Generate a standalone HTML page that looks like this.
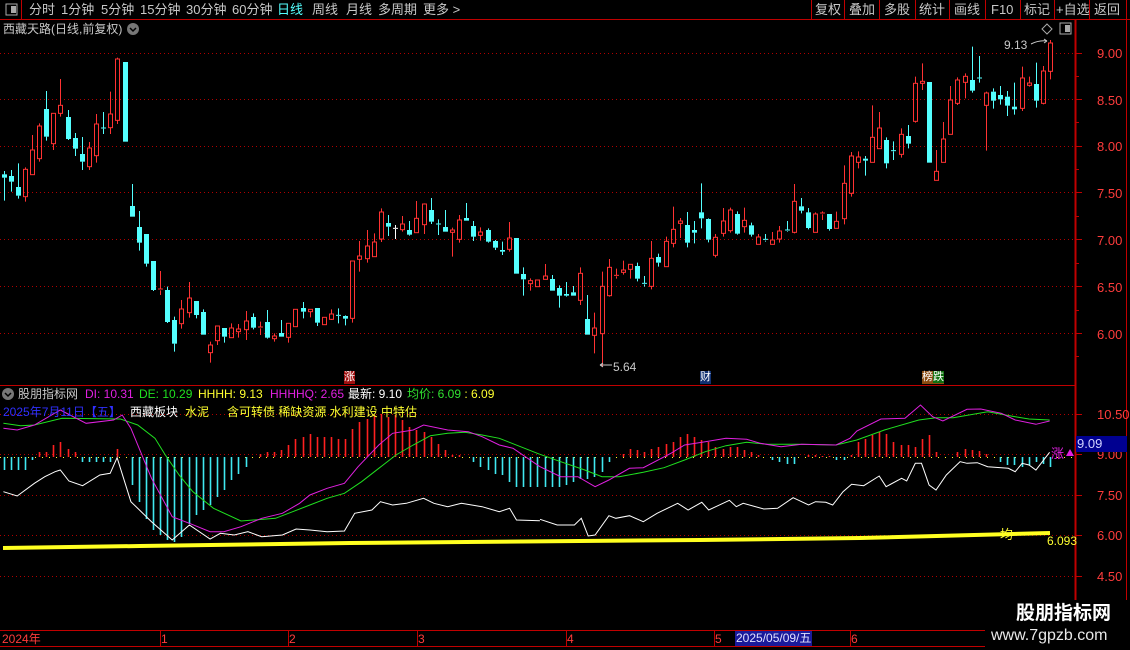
<!DOCTYPE html>
<html><head><meta charset="utf-8">
<style>
body{margin:0;background:#000;width:1130px;height:650px;overflow:hidden;position:relative;font-family:"Liberation Sans","Noto Sans CJK SC",sans-serif;}
.t{position:absolute;white-space:nowrap;font-size:13px;line-height:15px;}
.s{font-size:12px}
svg{position:absolute;left:0;top:0}
</style></head><body>
<svg id="s" width="1130" height="650" xmlns="http://www.w3.org/2000/svg"></svg>

<!-- top bar -->
<div class="t" style="left:29px;top:2px;color:#c8c8c8">分时</div>
<div class="t" style="left:61px;top:2px;color:#c8c8c8">1分钟</div>
<div class="t" style="left:101px;top:2px;color:#c8c8c8">5分钟</div>
<div class="t" style="left:140px;top:2px;color:#c8c8c8">15分钟</div>
<div class="t" style="left:186px;top:2px;color:#c8c8c8">30分钟</div>
<div class="t" style="left:232px;top:2px;color:#c8c8c8">60分钟</div>
<div class="t" style="left:277px;top:2px;color:#54ffff">日线</div>
<div class="t" style="left:312px;top:2px;color:#c8c8c8">周线</div>
<div class="t" style="left:346px;top:2px;color:#c8c8c8">月线</div>
<div class="t" style="left:378px;top:2px;color:#c8c8c8">多周期</div>
<div class="t" style="left:423px;top:2px;color:#c8c8c8">更多 &gt;</div>
<div class="t" style="left:815px;top:2px;color:#c8c8c8">复权</div>
<div class="t" style="left:849px;top:2px;color:#c8c8c8">叠加</div>
<div class="t" style="left:884px;top:2px;color:#c8c8c8">多股</div>
<div class="t" style="left:919px;top:2px;color:#c8c8c8">统计</div>
<div class="t" style="left:954px;top:2px;color:#c8c8c8">画线</div>
<div class="t" style="left:991px;top:2px;color:#c8c8c8">F10</div>
<div class="t" style="left:1024px;top:2px;color:#c8c8c8">标记</div>
<div class="t" style="left:1056px;top:2px;color:#c8c8c8">+自选</div>
<div class="t" style="left:1094px;top:2px;color:#c8c8c8">返回</div>

<div class="t s" style="left:3px;top:22px;color:#c8c8c8">西藏天路(日线,前复权)</div>

<!-- right axis labels main -->
<div class="t" style="left:1097px;top:46px;color:#ff3c3c">9.00</div>
<div class="t" style="left:1097px;top:93px;color:#ff3c3c">8.50</div>
<div class="t" style="left:1097px;top:139px;color:#ff3c3c">8.00</div>
<div class="t" style="left:1097px;top:186px;color:#ff3c3c">7.50</div>
<div class="t" style="left:1097px;top:233px;color:#ff3c3c">7.00</div>
<div class="t" style="left:1097px;top:280px;color:#ff3c3c">6.50</div>
<div class="t" style="left:1097px;top:327px;color:#ff3c3c">6.00</div>

<div class="t" style="left:1004px;top:38px;color:#c8c8c8;font-size:12px">9.13</div>
<div class="t" style="left:613px;top:360px;color:#c8c8c8;font-size:12px">5.64</div>
<div class="t" style="left:344px;top:371px;color:#fff;background:#a01010;font-size:11px;line-height:13px">涨</div>
<div class="t" style="left:700px;top:371px;color:#fff;background:#103070;font-size:11px;line-height:13px">财</div>
<div class="t" style="left:922px;top:371px;color:#fff;background:#8a4a10;font-size:11px;line-height:13px">榜<span style="background:#107010">跌</span></div>

<!-- indicator legend -->
<div class="t s" style="left:18px;top:387px;color:#c8c8c8">股朋指标网</div>
<div class="t s" style="left:85px;top:387px;color:#e020e0">DI: 10.31</div>
<div class="t s" style="left:139px;top:387px;color:#20e020">DE: 10.29</div>
<div class="t s" style="left:198px;top:387px;color:#ffff30">HHHH: 9.13</div>
<div class="t s" style="left:270px;top:387px;color:#e020e0">HHHHQ: 2.65</div>
<div class="t s" style="left:348px;top:387px;color:#fff">最新: 9.10</div>
<div class="t s" style="left:407px;top:387px;color:#30e030">均价: 6.09 <span style="color:#ffff30">: 6.09</span></div>
<div class="t s" style="left:3px;top:405px;color:#3030ff">2025年7月11日【五】</div>
<div class="t s" style="left:130px;top:405px;color:#fff">西藏板块</div>
<div class="t s" style="left:185px;top:405px;color:#ffff30">水泥</div>
<div class="t s" style="left:227px;top:405px;color:#ffff30">含可转债 稀缺资源 水利建设 中特估</div>

<div class="t" style="left:1097px;top:407px;color:#ff3c3c">10.50</div>
<div class="t" style="left:1097px;top:447px;color:#ff3c3c">9.00</div>
<div class="t" style="left:1076px;top:436px;width:50px;height:16px;background:#000090;color:#d0d0ff;line-height:16px;padding-left:1px">9.09</div>
<div class="t" style="left:1097px;top:488px;color:#ff3c3c">7.50</div>
<div class="t" style="left:1097px;top:528px;color:#ff3c3c">6.00</div>
<div class="t" style="left:1097px;top:569px;color:#ff3c3c">4.50</div>
<div class="t" style="left:1051px;top:446px;color:#e020e0">涨</div>
<div class="t" style="left:1000px;top:527px;color:#ffff30">均</div>
<div class="t" style="left:1047px;top:534px;color:#ffff30;font-size:12px">6.093</div>

<!-- bottom axis -->
<div class="t" style="left:2px;top:632px;color:#ff3c3c;font-size:12px">2024年</div>
<div class="t" style="left:161px;top:632px;color:#ff3c3c;font-size:12px">1</div>
<div class="t" style="left:289px;top:632px;color:#ff3c3c;font-size:12px">2</div>
<div class="t" style="left:418px;top:632px;color:#ff3c3c;font-size:12px">3</div>
<div class="t" style="left:567px;top:632px;color:#ff3c3c;font-size:12px">4</div>
<div class="t" style="left:715px;top:632px;color:#ff3c3c;font-size:12px">5</div>
<div class="t" style="left:735px;top:631px;color:#e0e0ff;background:#1a1a9a;font-size:12px;padding:0 1px">2025/05/09/五</div>
<div class="t" style="left:851px;top:632px;color:#ff3c3c;font-size:12px">6</div>

<!-- logo -->
<div style="position:absolute;left:985px;top:600px;width:145px;height:50px;background:#000"></div>
<div class="t" style="left:1016px;top:603px;color:#fff;font-size:19px;line-height:22px;font-weight:bold">股朋指标网</div>
<div class="t" style="left:991px;top:627px;color:#e8e8e8;font-size:16px;line-height:18px">www.7gpzb.com</div>

<script>
var S=document.getElementById('s'),h='';
function L(x1,y1,x2,y2,c,w,d){h+='<line x1="'+x1+'" y1="'+y1+'" x2="'+x2+'" y2="'+y2+'" stroke="'+c+'" stroke-width="'+(w||1)+'"'+(d?' stroke-dasharray="'+d+'"':'')+'/>';}
function R(x,y,w,hh,f,s){h+='<rect x="'+x+'" y="'+y+'" width="'+w+'" height="'+hh+'" fill="'+(f||'none')+'"'+(s?' stroke="'+s+'"':'')+'/>';}
L(0,19.5,1130,19.5,'#c00000');L(21.5,0,21.5,19,'#c00000');
[811,844,879,915,949,985,1020,1054,1089,1126].forEach(function(x){L(x+.5,0,x+.5,19,'#c00000');});
R(6,4,11,11,'#000','#aaa');R(11,6,5,7,'#aaa');
L(1075.5,20,1075.5,630,'#c00000',2);L(1126.5,20,1126.5,650,'#c00000');
L(0,385.5,1076,385.5,'#c00000');L(0,630.5,1130,630.5,'#c00000');L(0,646.5,1130,646.5,'#c00000');
[53,99,146,192,239,286,333].forEach(function(y){L(0,y+.5,1075,y+.5,'#b00000',1,'1 3');L(1076,y+.5,1082,y+.5,'#c00000');});
[414,454,495,535,576].forEach(function(y){L(0,y+.5,1075,y+.5,'#b00000',1,'1 3');L(1076,y+.5,1082,y+.5,'#c00000');});
[76,122,169,216,263,310,356].forEach(function(y){L(1076,y+.5,1079,y+.5,'#c00000');});
[160,288,417,566,714,850].forEach(function(x){L(x+.5,631,x+.5,646,'#c00000');});
h+='<circle cx="133" cy="29" r="6" fill="#777"/><path d="M130 28l3 3 3-3" stroke="#000" stroke-width="1.5" fill="none"/>';
h+='<circle cx="8" cy="394" r="6" fill="#777"/><path d="M5 393l3 3 3-3" stroke="#000" stroke-width="1.5" fill="none"/>';
h+='<path d="M1047 24l5 5-5 5-5-5z" stroke="#aaa" fill="none"/>';R(1060,23,11,11,'#000','#aaa');R(1065,25,5,7,'#aaa');
var C=[[403,413,393,482,'c'],[408,425,390,455,'c'],[441,467,370,476,'c'],[388,470,382,485,'r'],[330,404,285,404,'r'],[258,356,250,365,'r'],[207,290,153,302,'c'],[220,311,220,330,'r'],[196,220,117,230,'r'],[231,297,210,300,'c'],[294,326,279,348,'c'],[342,365,291,390,'c'],[324,380,306,390,'r'],[252,347,222,368,'r'],[264,266,216,282,'c'],[222,263,155,282,'r'],[57,241,53,252,'r'],[66,305,66,305,'c'],
[498,530,432,530,'c'],[561,608,513,632,'c'],[582,671,582,680,'c'],[663,750,663,753,'c'],[747,751,693,765,'r'],[750,846,740,849,'c'],[840,911,830,935,'c'],[807,851,780,866,'r'],[774,818,726,833,'r'],[783,825,783,835,'c'],[816,884,808,884,'c'],[915,938,905,968,'r'],[858,902,858,915,'r'],[864,890,864,908,'c'],[864,893,850,893,'r'],[867,875,852,893,'r'],[843,869,813,900,'r'],[831,863,820,868,'c'],[861,865,845,885,'r'],[846,893,810,896,'c'],[888,896,880,905,'r'],[879,890,840,890,'c'],[850,892,850,908,'r'],[808,860,808,860,'r'],[804,815,786,835,'c'],[808,815,808,832,'r'],[804,848,804,858,'c'],[832,854,832,854,'r'],[822,838,808,840,'r'],[826,828,805,850,'c'],[828,836,826,856,'c'],[663,835,663,848,'r'],[648,658,603,695,'r'],[618,656,570,668,'r'],[606,650,580,650,'r'],[516,597,505,606,'r'],[549,560,525,588,'c'],[565,567,555,597,'w'],[552,569,528,575,'r'],[570,584,543,587,'c'],[535,578,483,578,'r'],[492,554,490,582,'r'],[510,545,474,552,'c'],[552,554,538,585,'c'],[561,575,510,575,'c'],[570,577,563,650,'r'],[540,598,525,608,'r'],[534,542,489,542,'c'],[558,590,543,603,'c'],[576,586,562,602,'r'],[570,605,565,608,'c'],[603,623,600,630,'c'],[630,635,605,645,'c'],[594,628,546,635,'r'],[594,701,594,701,'c'],[702,718,682,767,'c'],[722,731,715,752,'r'],[720,740,720,740,'r'],
[708,718,672,718,'r'],[717,752,705,752,'c'],[744,767,736,803,'c'],[762,767,726,770,'c'],[757,767,738,767,'c'],[700,781,682,795,'r'],[837,884,765,884,'c'],[864,886,818,940,'r'],[739,881,695,980,'r'],[682,767,657,770,'r'],[706,709,686,716,'r'],[690,697,662,704,'r'],[673,688,673,716,'r'],[678,716,668,724,'c'],[730,733,708,740,'c'],[655,739,603,748,'r'],[651,668,641,680,'c'],[604,680,590,680,'r'],[568,610,500,622,'r'],[543,550,534,594,'r'],[555,608,516,622,'c'],[570,578,543,610,'c'],[517,535,430,565,'c'],[537,599,535,607,'c'],[592,646,582,652,'r'],[543,580,504,590,'r'],[510,572,503,578,'r'],[522,581,514,584,'c'],[541,560,503,578,'r'],[556,584,548,590,'c'],[591,613,582,613,'r'],[598,602,582,605,'c'],[600,613,576,613,'r'],[573,597,558,608,'r'],[570,573,543,575,'c'],[484,577,432,580,'r'],[499,512,474,520,'c'],[517,564,504,568,'c'],[522,577,517,577,'r'],[519,523,514,540,'r'],[522,567,522,572,'c'],[544,565,515,565,'r'],[430,536,376,553,'r'],[348,460,336,470,'r'],[351,367,334,385,'r'],[356,362,348,407,'c'],[292,367,196,367,'r'],[264,326,216,326,'r'],[300,370,292,385,'c'],[332,334,304,360,'c'],[283,343,265,353,'r'],[288,311,255,325,'c'],[130,244,110,248,'r'],[124,130,70,150,'r'],[126,368,126,368,'c'],[394,421,330,421,'r'],[297,367,246,367,'r'],[180,283,138,283,'r'],[120,190,112,195,'r'],[109,127,100,175,'r'],[120,152,20,158,'c'],[114,116,48,128,'c'],[159,196,155,332,'r'],[155,182,145,206,'c'],[165,178,138,194,'c'],[170,197,153,228,'c'],[200,208,128,224,'c'],[114,205,80,213,'r'],[129,136,110,140,'r'],[132,182,68,203,'c'],[93,190,78,193,'r'],[9,94,0,118,'r']];
var n=C.length,sp=(1050-3.5)/(n-1);
function X(i){return 3.5+sp*i;}
C.forEach(function(d,i){var x=Math.round(X(i))+.5,t=40+d[0]/3,b=40+d[1]/3,hi=40+d[2]/3,lo=40+d[3]/3;
 var col=d[4]=='c'?'#54ffff':d[4]=='w'?'#fff':'#ff3232';
 L(x,hi,x,t,col);L(x,b,x,lo,col);
 if(b-t<1.5){L(x-2.5,t,x+2.5,t,col);}
 else if(d[4]=='r'){h+='<rect x="'+(x-2)+'" y="'+t+'" width="4" height="'+(b-t)+'" fill="none" stroke="'+col+'"/>';}
 else R(x-2.5,t,5,b-t,col);
});
h+='<path d="M600 365h12M600 365l3-2M600 365l3 2" stroke="#c8c8c8" fill="none"/>';
h+='<path d="M1031 44q8-4 16-3M1047 41l-3-2M1047 41l-3 2" stroke="#c8c8c8" fill="none"/>';
L(0,457.5,1075,457.5,'#ffff30',1,'1 6');
var H=[-13,-13,-13,-13,-3,5,5,12,15,8,5,-5,-5,-5,-5,-5,8,0,-28,-45,-62,-73,-78,-83,-85,-80,-67,-58,-53,-48,-40,-33,-23,-17,-10,0,3,5,5,7,12,18,20,23,20,20,20,18,18,28,35,38,42,43,40,42,37,30,27,25,20,13,7,2,2,0,-5,-10,-13,-17,-18,-25,-30,-30,-30,-30,-30,-30,-30,-28,-25,-22,-22,-20,-15,-5,0,3,8,7,5,8,10,13,15,20,23,20,17,15,10,8,10,10,7,5,2,0,-3,-5,-7,-7,0,2,2,1,1,-3,-3,2,15,18,22,25,23,15,12,12,10,18,22,5,0,0,5,8,7,6,3,0,-5,-8,-8,-10,-8,-5,-7,-10,0];
H.forEach(function(v,i){if(!v)return;var x=Math.round(X(i))+.5;L(x,457,x,457-v,v>0?'#ff2020':'#40e8f0',1.6);});
function P(a,off,col,w){var s='';for(var i=0;i<a.length;i+=2){s+=(i?'L':'M')+(off+a[i]/2.904).toFixed(1)+' '+(395+a[i+1]/3).toFixed(1);}h+='<path d="'+s+'" stroke="'+col+'" stroke-width="'+(w||1)+'" fill="none"/>';}
P([10,290,50,303,100,265,130,245,160,230,175,225,200,258,240,272,290,240,320,235,340,188,380,320,440,380,500,435,550,390,610,432,640,415,680,420,720,410,760,425,820,420,860,402,900,405,950,410,1000,408,1030,355,1080,345,1105,320,1140,330,1180,325,1230,310,1260,325,1300,335,1340,325,1400,335,1450,350,1480,340,1500,375,1568,377],0,'#fff');
P([0,373,50,390,100,390,120,370,140,423,160,420,200,362,220,370,260,362,300,380,340,355,400,325,430,345,470,322,490,345,550,316,570,335,590,325,650,342,690,340,735,308,780,330,800,320,830,322,850,330,880,290,905,268,940,272,985,243,1005,275,1050,250,1065,258,1090,205,1108,205,1130,270,1150,285,1180,240,1220,200,1240,205,1270,203,1300,215,1360,220,1380,230,1400,205,1420,210,1440,225,1480,172],540,'#fff');
P([10,85,60,92,100,90,180,70,350,72,400,90,450,130,480,180,520,240,560,290,620,340,700,378,800,370,850,350,900,330,950,310,1000,295,1050,260,1100,220,1150,180,1200,150,1250,122,1300,115,1350,112,1400,120,1450,130,1568,178],0,'#20e020');
P([0,178,60,200,130,225,180,245,230,245,300,232,360,218,420,195,480,170,540,152,600,142,660,148,750,148,860,150,920,135,1000,105,1100,75,1150,68,1200,68,1300,50,1380,65,1420,72,1480,75],540,'#20e020');
P([10,100,50,105,100,90,175,45,250,85,330,75,355,60,380,100,440,250,500,365,550,385,610,410,650,410,700,395,760,370,820,355,870,325,900,300,950,280,1000,265,1040,215,1100,150,1140,115,1200,105,1230,90,1300,105,1360,110,1400,125,1450,150,1490,160,1568,215],0,'#e020e0');
P([0,215,60,245,110,245,160,275,200,255,260,220,300,218,380,175,420,150,480,140,540,130,600,133,640,145,700,155,760,148,860,150,900,130,920,108,990,72,1060,70,1105,30,1140,65,1170,78,1240,43,1280,42,1340,55,1380,75,1440,88,1480,78],540,'#e020e0');
h+='<path d="M3 548 L140 546 L350 543 L700 540 L860 538 L1050 533" stroke="#ffff20" stroke-width="4" fill="none"/>';
h+='<path d="M1066 456l4-7 4 7z" fill="#e020e0"/>';
S.innerHTML=h;
</script>
</body></html>
